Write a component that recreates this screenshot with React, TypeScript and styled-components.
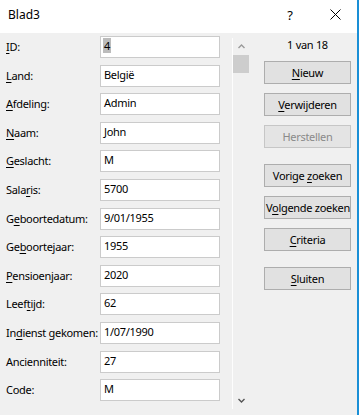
import React from "react";
import styled, { createGlobalStyle } from "styled-components";

const FONT = `"Noto Sans", "Open Sans", "DejaVu Sans", sans-serif`;

const GlobalStyle = createGlobalStyle`
  html, body {
    margin: 0;
    padding: 0;
    background: #f0f0f0;
  }
  body {
    font-family: ${FONT};
    font-size: 11px;
    letter-spacing: -0.3px;
    color: #000;
  }
`;

interface Field {
  label: string;
  accel?: number;
  value: string;
  selected?: boolean;
}

const fields: Field[] = [
  { label: "ID", accel: 0, value: "4", selected: true },
  { label: "Land", accel: 0, value: "België" },
  { label: "Afdeling", accel: 0, value: "Admin" },
  { label: "Naam", accel: 0, value: "John" },
  { label: "Geslacht", accel: 0, value: "M" },
  { label: "Salaris", accel: 4, value: "5700" },
  { label: "Geboortedatum", accel: 1, value: "9/01/1955" },
  { label: "Geboortejaar", accel: 2, value: "1955" },
  { label: "Pensioenjaar", accel: 0, value: "2020" },
  { label: "Leeftijd", accel: 4, value: "62" },
  { label: "Indienst gekomen", accel: 2, value: "1/07/1990" },
  { label: "Ancienniteit", value: "27" },
  { label: "Code", value: "M" },
];

interface Action {
  text: string;
  accel?: number;
  disabled?: boolean;
  newGroup?: boolean;
}

const actions: Action[] = [
  { text: "Nieuw", accel: 0 },
  { text: "Verwijderen", accel: 0 },
  { text: "Herstellen", disabled: true },
  { text: "Vorige zoeken", accel: 7, newGroup: true },
  { text: "Volgende zoeken", accel: 1 },
  { text: "Criteria", accel: 0 },
  { text: "Sluiten", accel: 0, newGroup: true },
];

const Accel = ({ text, at }: { text: string; at?: number }) =>
  at === undefined ? (
    <>{text}</>
  ) : (
    <>
      {text.slice(0, at)}
      <u>{text[at]}</u>
      {text.slice(at + 1)}
    </>
  );

const Chevron = ({ down, color }: { down?: boolean; color: string }) => (
  <svg width="7" height="5" viewBox="0 0 7 5">
    <polyline
      points={down ? "0.5,1 3.5,4 6.5,1" : "0.5,4 3.5,1 6.5,4"}
      fill="none"
      stroke={color}
      strokeWidth="1.4"
    />
  </svg>
);

const App: React.FC = () => {
  return (
    <>
      <GlobalStyle />
      <Window>
        <TitleBar>
          <Title>Blad3</Title>
          <CaptionButton width={46}>?</CaptionButton>
          <CaptionButton width={44}>
            <svg width="11" height="11" viewBox="0 0 11 11">
              <path d="M0.5 0.5 L10.5 10.5 M10.5 0.5 L0.5 10.5" stroke="#000" strokeWidth="1" />
            </svg>
          </CaptionButton>
        </TitleBar>
        <Body>
          <FieldsPane>
            {fields.map((f) => (
              <React.Fragment key={f.label}>
                <FieldLabel>
                  <Accel text={f.label} at={f.accel} />:
                </FieldLabel>
                <TextBox>
                  {f.selected ? <Selection>{f.value}</Selection> : f.value}
                </TextBox>
              </React.Fragment>
            ))}
          </FieldsPane>
          <ScrollBar>
            <ScrollArrow>
              <Chevron color="#9a9a9a" />
            </ScrollArrow>
            <Track>
              <Thumb />
            </Track>
            <ScrollArrow>
              <Chevron down color="#555" />
            </ScrollArrow>
          </ScrollBar>
          <ActionsPane>
            <Counter>1 van 18</Counter>
            {actions.map((a) => (
              <Button key={a.text} disabled={a.disabled} $newGroup={a.newGroup}>
                <Accel text={a.text} at={a.accel} />
              </Button>
            ))}
          </ActionsPane>
        </Body>
      </Window>
    </>
  );
};

const Window = styled.div`
  width: 359px;
  height: 415px;
  box-sizing: border-box;
  border-right: 2px solid #1a8fd6;
  background: #f0f0f0;
  display: flex;
  flex-direction: column;
  overflow: hidden;
`;

const TitleBar = styled.div`
  height: 33px;
  flex: none;
  background: #fff;
  display: flex;
  align-items: flex-start;
`;

const Title = styled.div`
  flex: 1;
  padding: 6px 0 0 8px;
  line-height: 17px;
  font-size: 12px;
  letter-spacing: 0;
`;

const CaptionButton = styled.div<{ width: number }>`
  width: ${({ width }) => width}px;
  height: 29px;
  display: flex;
  align-items: center;
  justify-content: center;
  font-size: 13px;
`;

const Body = styled.div`
  flex: 1;
  display: flex;
  align-items: flex-start;
`;

const FieldsPane = styled.div`
  width: 232px;
  box-sizing: border-box;
  padding: 3px 0 0 6px;
  display: grid;
  grid-template-columns: 94px 120px;
  grid-auto-rows: 22px;
  row-gap: 6.6px;
  align-items: center;
`;

const FieldLabel = styled.div`
  white-space: nowrap;
  line-height: 16px;

  u {
    text-underline-offset: 2px;
  }
`;

const TextBox = styled.div`
  height: 22px;
  box-sizing: border-box;
  background: #fff;
  border: 1px solid #cbcbcb;
  padding: 0 3px;
  line-height: 17px;
  white-space: nowrap;
  overflow: hidden;
`;

const Selection = styled.span`
  display: inline-block;
  background: #bcbcbc;
  line-height: 15px;
  padding: 0 1px;
  margin-left: -1px;
`;

const ScrollBar = styled.div`
  margin-top: 5px;
  width: 17px;
  height: 371px;
  box-sizing: border-box;
  border-left: 1px solid #fdfdfd;
  display: flex;
  flex-direction: column;
`;

const ScrollArrow = styled.div`
  height: 17px;
  flex: none;
  display: flex;
  align-items: center;
  justify-content: center;
`;

const Track = styled.div`
  flex: 1;
`;

const Thumb = styled.div`
  height: 18px;
  background: #cdcdcd;
`;

const ActionsPane = styled.div`
  margin-left: 15px;
  width: 87px;
  padding-top: 4px;
  display: flex;
  flex-direction: column;
  gap: 9px;
`;

const Counter = styled.div`
  text-align: center;
  line-height: 16px;
  margin-bottom: -1px;
`;

const Button = styled.div<{ disabled?: boolean; $newGroup?: boolean }>`
  height: 23px;
  box-sizing: border-box;
  margin-top: ${({ $newGroup }) => ($newGroup ? 7 : 0)}px;
  background: ${({ disabled }) => (disabled ? "#e4e4e4" : "#e1e1e1")};
  border: 1px solid ${({ disabled }) => (disabled ? "#c6c6c6" : "#adadad")};
  color: ${({ disabled }) => (disabled ? "#8a8a8a" : "#000")};
  padding: 0 1px;
  line-height: 21px;
  text-align: center;
  white-space: nowrap;
  overflow: hidden;

  u {
    text-underline-offset: 2px;
  }
`;

export default App;
